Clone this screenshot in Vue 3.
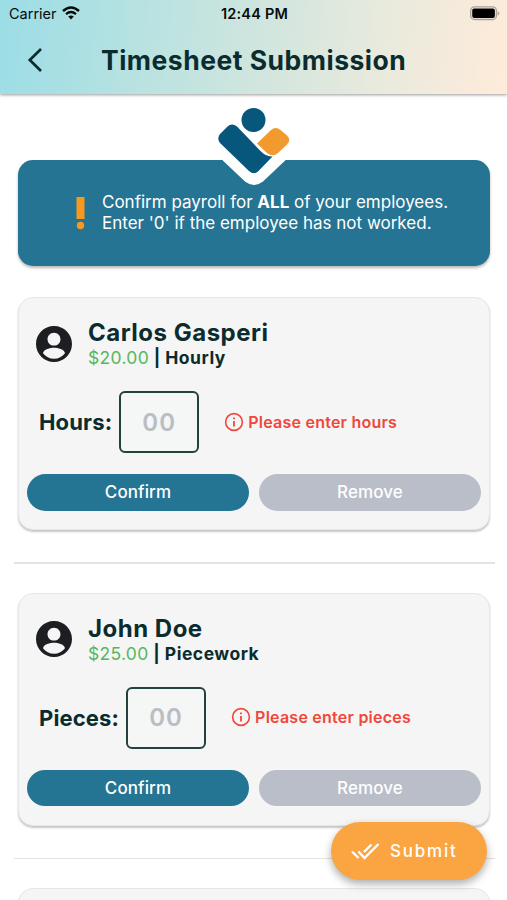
<script setup>
const employees = [
  { name: 'Carlos Gasperi', rate: '$20.00', type: 'Hourly', unit: 'Hours' },
  { name: 'John Doe', rate: '$25.00', type: 'Piecework', unit: 'Pieces' },
  { name: '', rate: '', type: '', unit: '' },
]
</script>

<template>
  <div class="screen">
    <header class="header">
      <div class="status">
        <div class="carrier">
          <span>Carrier</span>
          <svg class="wifi" viewBox="0 0 18 14">
            <path d="M1 5Q9-2 17 5" fill="none" stroke="#080b0c" stroke-width="2.5" />
            <path d="M4 8.1Q9 3.9 14 8.1" fill="none" stroke="#080b0c" stroke-width="2.3" />
            <path d="M6.2 10.6Q9 8.4 11.8 10.6L9 13.4Z" fill="#080b0c" />
          </svg>
        </div>
        <span class="clock">12:44 PM</span>
        <div class="power">
          <svg class="battery" viewBox="0 0 31 15">
            <rect x=".7" y=".7" width="26.6" height="13" rx="4" fill="none" stroke="#a9a297" stroke-width="1.4" />
            <rect x="2.3" y="2.3" width="23.4" height="9.8" rx="2" fill="#000" />
            <path d="M28.6 4.8Q32 7.2 28.6 9.8Z" fill="#a9a297" />
          </svg>
        </div>
      </div>
      <div class="nav">
        <svg class="back" viewBox="0 0 16 26"><path d="M14 2L2.800 13L14 24" fill="none" stroke="#0b2c2e" stroke-width="2.7" /></svg>
        <h1>Timesheet Submission</h1>
      </div>
    </header>

    <main>
      <section class="notice">
        <svg class="logo" viewBox="0 0 110 100">
          <path d="M17 60L45 86.500Q54 93.500 63 86.500L91 60Z" fill="#fff" />
          <circle cx="53.500" cy="25" r="12" fill="#07577d" />
          <path d="M20 39L27.500 31.500Q32 27.500 37 31.500L61 56.500Q66 61.500 72.500 61.500L58.500 76Q54 80.500 49 76L20 48Q16.500 43.500 20 39Z" fill="#07577d" />
          <path d="M57 49L71 35.500Q75.500 31.500 80.500 35.500L87 41Q91.500 45.500 87 50L78 58.500Q73 63 67 58.500Z" transform="translate(0 -.5)" fill="#f29a2e" />
        </svg>
        <svg class="alert" viewBox="0 0 8 33"><path d="M0 0H8V22H0Z" fill="#f8991f" /><circle cx="4" cy="28.500" r="3.700" fill="#f8991f" /></svg>
        <p>Confirm payroll for <b>ALL</b> of your employees.<br>Enter '0' if the employee has not worked.</p>
      </section>

      <section class="list">
        <template v-for="(e, i) in employees" :key="i">
          <hr v-if="i" class="divider">
          <article class="card">
            <template v-if="e.name">
              <div class="person">
                <svg class="avatar" viewBox="2 2 20 20"><path d="M12 2C6.480 2 2 6.480 2 12s4.480 10 10 10 10-4.480 10-10S17.520 2 12 2zm0 3.700c2 0 3.600 1.600 3.600 3.600s-1.600 3.600-3.600 3.600-3.600-1.600-3.600-3.600 1.600-3.600 3.600-3.600zm0 14.500c-2.500 0-4.700-1.200-6.100-3.100.1-2 4.100-3 6.100-3s6 1 6.100 3c-1.400 1.900-3.600 3.100-6.100 3.100z" fill="#1d1e21" /></svg>
                <div>
                  <h2>{{ e.name }}</h2>
                  <div class="pay"><span class="rate">{{ e.rate }}</span> | {{ e.type }}</div>
                </div>
              </div>
              <div class="entry">
                <label>{{ e.unit }}:</label>
                <div class="field">00</div>
                <div class="error">
                  <svg viewBox="0 0 20 20"><circle cx="10" cy="10" r="8.400" fill="none" stroke="#ef473b" stroke-width="1.600" /><path d="M10 8.900V14.500M10 5.500V7.300" stroke="#ef473b" stroke-width="1.800" /></svg>
                  <span>Please enter {{ e.unit.toLowerCase() }}</span>
                </div>
              </div>
              <div class="actions">
                <button class="confirm">Confirm</button>
                <button class="remove">Remove</button>
              </div>
            </template>
          </article>
        </template>
      </section>
    </main>

    <button class="submit">
      <svg viewBox="0 0 30 20"><path d="M2 10.500L8.500 17M8.500 10.500L14.500 17L28.500 3M14 11L21.500 3.500" fill="none" stroke="#fff" stroke-width="2.400" /></svg>
      <span>Submit</span>
    </button>
  </div>
</template>

<style>
body { margin: 0; background: #fff; overflow: hidden; }
</style>

<style scoped>
* { box-sizing: border-box; }
.screen { position: relative; width: 507px; height: 900px; overflow: hidden; background: #fff; font-family: Inter, sans-serif; color: #0b2c2e; }
svg { display: block; flex: none; }
h1, h2, p { margin: 0; }
button { border: 0; padding: 0; font-family: inherit; color: #fff; }
.header { height: 94px; background: linear-gradient(98deg, #9bdde6 0%, #bee3e0 34%, #d4e6de 55%, #e9eadd 75%, #ffebda 100%); box-shadow: 0 1px 3px rgba(0, 0, 0, .4); }
.status { height: 26px; display: grid; grid-template-columns: 1fr auto 1fr; align-items: center; padding: 0 7px 0 9px; color: #080b0c; font-size: 14.500px; }
.carrier { display: flex; align-items: center; gap: 5px; letter-spacing: 0; }
.wifi { width: 18px; height: 14px; }
.clock { font-weight: 600; font-size: 14.500px; letter-spacing: .2px; padding-top: 1px; }
.power { display: flex; justify-content: flex-end; }
.battery { width: 30px; height: 15px; }
.nav { height: 68px; display: flex; align-items: center; padding-left: 27px; }
.back { width: 16px; height: 26px; }
h1 { margin-left: 58px; font-size: 26.500px; line-height: 32px; font-weight: 650; letter-spacing: .5px; white-space: nowrap; }
main { padding-top: 66px; }
.notice { position: relative; height: 106px; margin: 0 17px 0 18px; padding: 32px 0 0 58px; display: flex; background: #257493; border-radius: 15px; box-shadow: 0 2px 3px rgba(0, 0, 0, .28); color: #fff; }
.logo { position: absolute; left: 182px; top: -65px; width: 110px; height: 100px; }
.alert { width: 9px; height: 33px; margin-top: 5px; }
.notice p { margin-left: 17px; font-size: 17px; line-height: 21px; letter-spacing: 0; white-space: nowrap; }
.list { padding-top: 31px; }
.card { height: 233px; margin: 0 17px 0 18px; padding: 18.500px 8px 0; background: #f5f5f5; border: 1px solid #e5e6e7; border-radius: 15px; box-shadow: 0 2px 2px rgba(0, 0, 0, .22); }
.divider { height: 1.500px; margin: 32px 12px 29px 14px; border: 0; background: #e3e3e3; }
.person { display: flex; align-items: center; height: 54px; padding-left: 9px; gap: 16px; }
.avatar { width: 36px; height: 36px; }
h2 { font-size: 24px; line-height: 29px; font-weight: 650; letter-spacing: .5px; }
.pay { font-size: 17.500px; line-height: 22px; font-weight: 650; letter-spacing: .5px; }
.rate { color: #55b85b; font-weight: 400; letter-spacing: .3px; }
.entry { height: 62px; margin-top: 20.500px; padding-left: 12px; display: flex; align-items: center; }
label { font-size: 22px; font-weight: 650; letter-spacing: .15px; }
.field { width: 80px; height: 62px; margin-left: 7px; display: flex; align-items: center; justify-content: center; border: 2px solid #23413e; border-radius: 6px; background: #f5f6f6; color: #babdc2; font-size: 24px; font-weight: 600; letter-spacing: 1px; }
.error { display: flex; align-items: center; gap: 4px; margin: -1px 0 0 25px; color: #ef473b; font-size: 16px; font-weight: 600; letter-spacing: .24px; }
.error svg { width: 20px; height: 20px; }
.actions { display: grid; grid-template-columns: 1fr 1fr; gap: 10px; margin-top: 21px; }
.actions button { height: 36.500px; border-radius: 19px; font-size: 17px; font-weight: 550; letter-spacing: .1px; }
.confirm { background: #247594; }
.remove { background: #b9bec8; }
.submit { position: absolute; left: 331px; top: 822px; width: 156px; height: 58px; padding-left: 19px; display: flex; align-items: center; gap: 10px; border-radius: 29px; background: #faa541; box-shadow: 0 4px 9px rgba(0, 0, 0, .32); font-size: 17px; font-weight: 550; letter-spacing: 1.800px; }
.submit svg { width: 30px; height: 20px; }
</style>
